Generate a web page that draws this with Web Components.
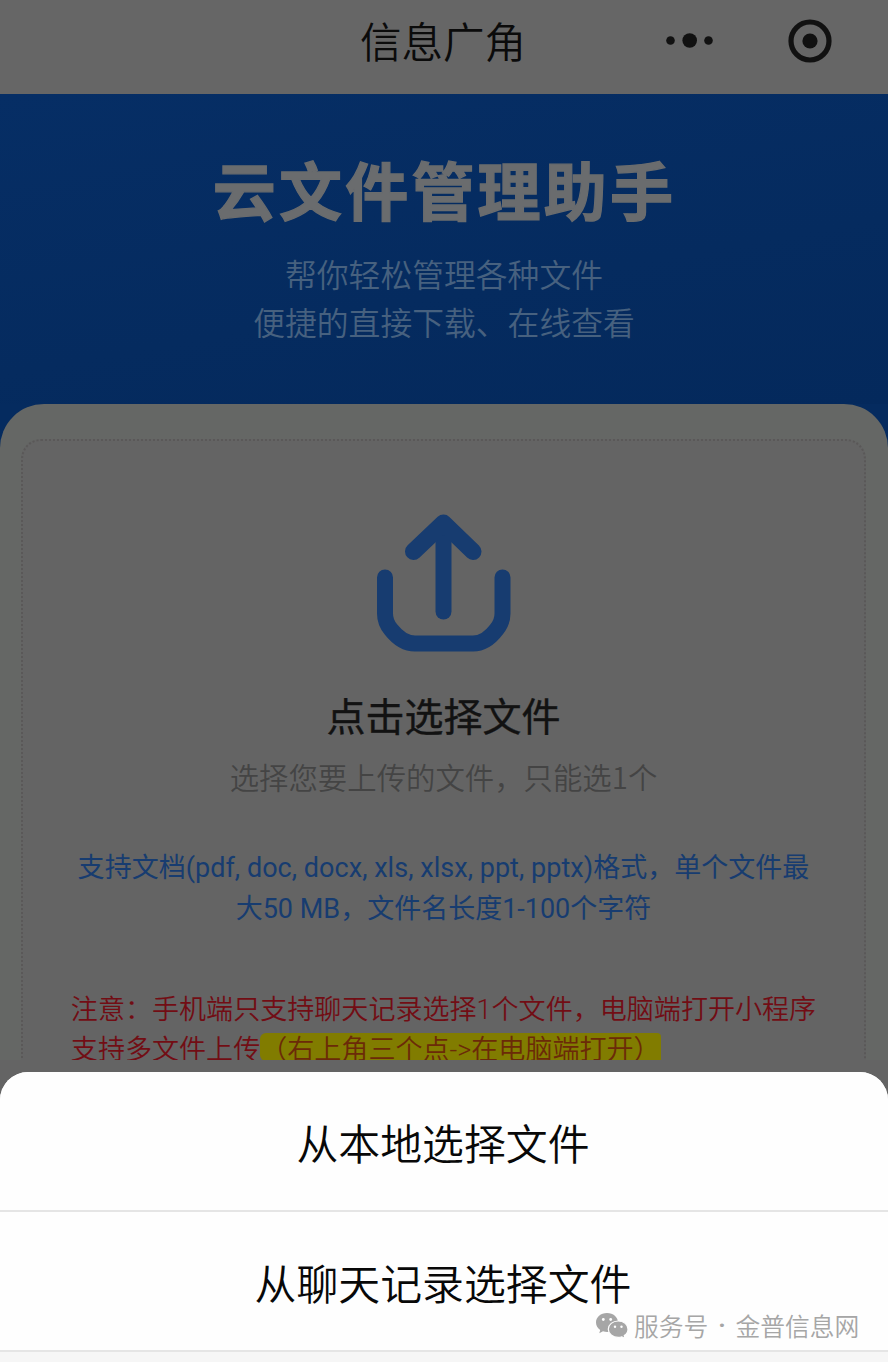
<!DOCTYPE html>
<html lang="zh-CN">
<head>
<meta charset="utf-8">
<title>信息广角</title>
<style>
html,body{margin:0;background:#646464}
body{width:888px;height:1362px;overflow:hidden;font-family:"Noto Sans CJK SC",sans-serif;font-weight:350;position:relative}
</style>
</head>
<body>
<mini-app>
  <nav-bar>信息广角</nav-bar>
  <hero-banner>
    云文件管理助手
    <text-line slot="sub">帮你轻松管理各种文件</text-line>
    <text-line slot="sub">便捷的直接下载、在线查看</text-line>
  </hero-banner>
  <upload-card>
    <span slot="title">点击选择文件</span>
    <span slot="hint">选择您要上传的文件，只能选1个</span>
    <text-line slot="formats" style="--ls:0.03px">支持文档(pdf, doc, docx, xls, xlsx, ppt, pptx)格式，单个文件最</text-line>
    <text-line slot="formats">大50 MB，文件名长度1-100个字符</text-line>
    <text-line slot="notice">注意：手机端只支持聊天记录选择1个文件，电脑端打开小程序</text-line>
    <text-line slot="notice">支持多文件上传<high-light>（右上角三个点-&gt;在电脑端打开）</high-light></text-line>
  </upload-card>
  <action-sheet slot="sheet">
    <sheet-item>从本地选择文件</sheet-item>
    <sheet-item>从聊天记录选择文件</sheet-item>
  </action-sheet>
  <account-mark slot="sheet"><span>服务号</span><span>·</span><span>金普信息网</span></account-mark>
</mini-app>
<script>
function define(name, html){
  const t=document.createElement('template');
  t.innerHTML=html;
  customElements.define(name,class extends HTMLElement{
    constructor(){super();this.attachShadow({mode:'open'}).appendChild(t.content.cloneNode(true));}
  });
}
define('mini-app',`<style>
:host{display:block;position:relative;width:888px;height:1362px;overflow:hidden;background:#646464}
.page{height:1060px;overflow:hidden;display:flex;flex-direction:column;background:#052b5f}
</style><div class="page"><slot></slot></div><slot name="sheet"></slot>`);

define('nav-bar',`<style>
:host{display:grid;grid-template-columns:1fr 166px 1fr;flex:none;height:94px;background:#666;color:#0b0b0b}
.t{font-size:41.5px;line-height:80px;text-align:center;white-space:nowrap;margin-left:-2px}
svg{display:block}
</style><span></span><div class="t"><slot></slot></div>
<svg width="361" height="94" viewBox="527 0 361 94" fill="#111"><circle cx="670.5" cy="40.5" r="4.3"/><circle cx="689.7" cy="40.5" r="7.3"/><circle cx="708.500" cy="40.5" r="4.3"/><circle cx="810" cy="41" r="19" fill="none" stroke="#111" stroke-width="5.2"/><circle cx="810" cy="41" r="7.6"/></svg>`);

define('hero-banner',`<style>
:host{display:block;flex:none;box-sizing:border-box;height:310px;padding-top:54px;text-align:center;color:#6a6c6e;background:linear-gradient(170deg,#062e65,#052b5f 60%,#04295c)}
h1{margin:0 0 21px;font-size:63px;letter-spacing:3.2px;text-indent:1px;line-height:80px;font-weight:700;-webkit-text-stroke:1.3px #6a6c6e}
.s{font-size:31.8px;line-height:48px;color:#47617f}
</style><h1><slot></slot></h1><div class="s"><slot name="sub"></slot></div>`);

define('text-line',`<style>:host{display:block;white-space:nowrap;letter-spacing:var(--ls,0)}</style><slot></slot>`);

define('high-light',`<style>
:host{display:inline-block;width:401px;height:28px;line-height:28px;background:#817c00;border-radius:6px 4px 0 6px;color:#6b2a08;vertical-align:top;margin-top:3px}
span{display:block;margin-top:3px}
</style><span><slot></slot></span>`);

define('upload-card',`<style>
:host{display:block;flex:none;box-sizing:border-box;height:700px;padding:35px 22px 0 21px;background:#656765;border-radius:44px 44px 0 0}
.box{box-sizing:border-box;height:700px;border:2px dotted #5a5858;border-radius:20px;background:#646464;display:flex;flex-direction:column;align-items:center;padding-top:73px}
svg{display:block;flex:none}
.title{font-size:39px;line-height:50px;margin-top:35px;color:#121212;font-weight:400;-webkit-text-stroke:.4px #121212}
.hint{font-size:29.4px;line-height:40px;margin-top:17px;color:#444}
.f,.n{font-family:Roboto,"Noto Sans CJK SC",sans-serif;font-size:27px;line-height:41px;text-align:center}
.f{margin-top:52px;color:#173c70;font-weight:400}
.n{margin-top:60px;color:#720d14;font-size:27.05px;line-height:40px;text-align:left}
</style><div class="box">
<svg width="140" height="140" viewBox="374 513.500 140 140" fill="none" stroke="#173c70" stroke-width="16" stroke-linecap="round" stroke-linejoin="round"><path d="M385 577V613Q385 622 391 629Q402 643 415 643H473Q486 643 496.500 629Q502.500 622 502.500 613V577"/><path d="M443.500 611V526"/><path d="M413.500 551L443.500 522.500L473 551" stroke-width="17"/></svg>
<div class="title"><slot name="title"></slot></div>
<div class="hint"><slot name="hint"></slot></div>
<div class="f"><slot name="formats"></slot></div>
<div class="n"><slot name="notice"></slot></div></div>`);

define('action-sheet',`<style>
:host{position:absolute;left:0;right:0;bottom:0;height:290px;background:#f6f6f6;border-radius:28px 28px 0 0;overflow:hidden}
</style><slot></slot>`);
define('sheet-item',`<style>
:host{display:block;box-sizing:border-box;height:140px;background:#fefefe;border-bottom:2px solid #e5e5e5;text-align:center;font-size:41.9px;line-height:139px;color:#080808;padding-right:2px}
</style><slot></slot>`);
define('account-mark',`<style>
:host{position:absolute;left:596px;top:1307px;display:flex;align-items:center;height:36px;font-size:24.8px;line-height:36px;color:#a6a6a6;white-space:nowrap}
svg{margin-right:6px}
.t{display:flex;gap:7px}
::slotted(:nth-child(2)){font-family:Roboto,sans-serif;font-weight:700;width:13px;text-align:center}
</style><svg width="32" height="27" viewBox="0 0 32 27"><path fill="#a6a6a6" d="M11 1C4.700 1 0 5.200 0 10.500C0 13.700 1.700 16.300 4.200 18L3.300 21.200L7 19.300C8.300 19.700 9.700 20 11.200 20C17.500 20 22 15.700 22 10.500C22 5.200 17.300 1 11 1Z"/><path fill="#a6a6a6" stroke="#fefefe" stroke-width="1.200" d="M22.200 9C16.700 9 12.300 12.600 12.300 17.200C12.300 21.800 16.700 25.400 22.200 25.400C23.500 25.400 24.800 25.200 25.900 24.800L29 26.500L28.300 23.600C30.600 22.100 32 19.800 32 17.200C32 12.600 27.700 9 22.200 9Z"/><g fill="#fefefe"><circle cx="7.300" cy="7.500" r="1.400"/><circle cx="14.700" cy="7.500" r="1.400"/><circle cx="19" cy="14.700" r="1.200"/><circle cx="25.500" cy="14.700" r="1.200"/></g></svg><div class="t"><slot></slot></div>`);
</script>
</body>
</html>
